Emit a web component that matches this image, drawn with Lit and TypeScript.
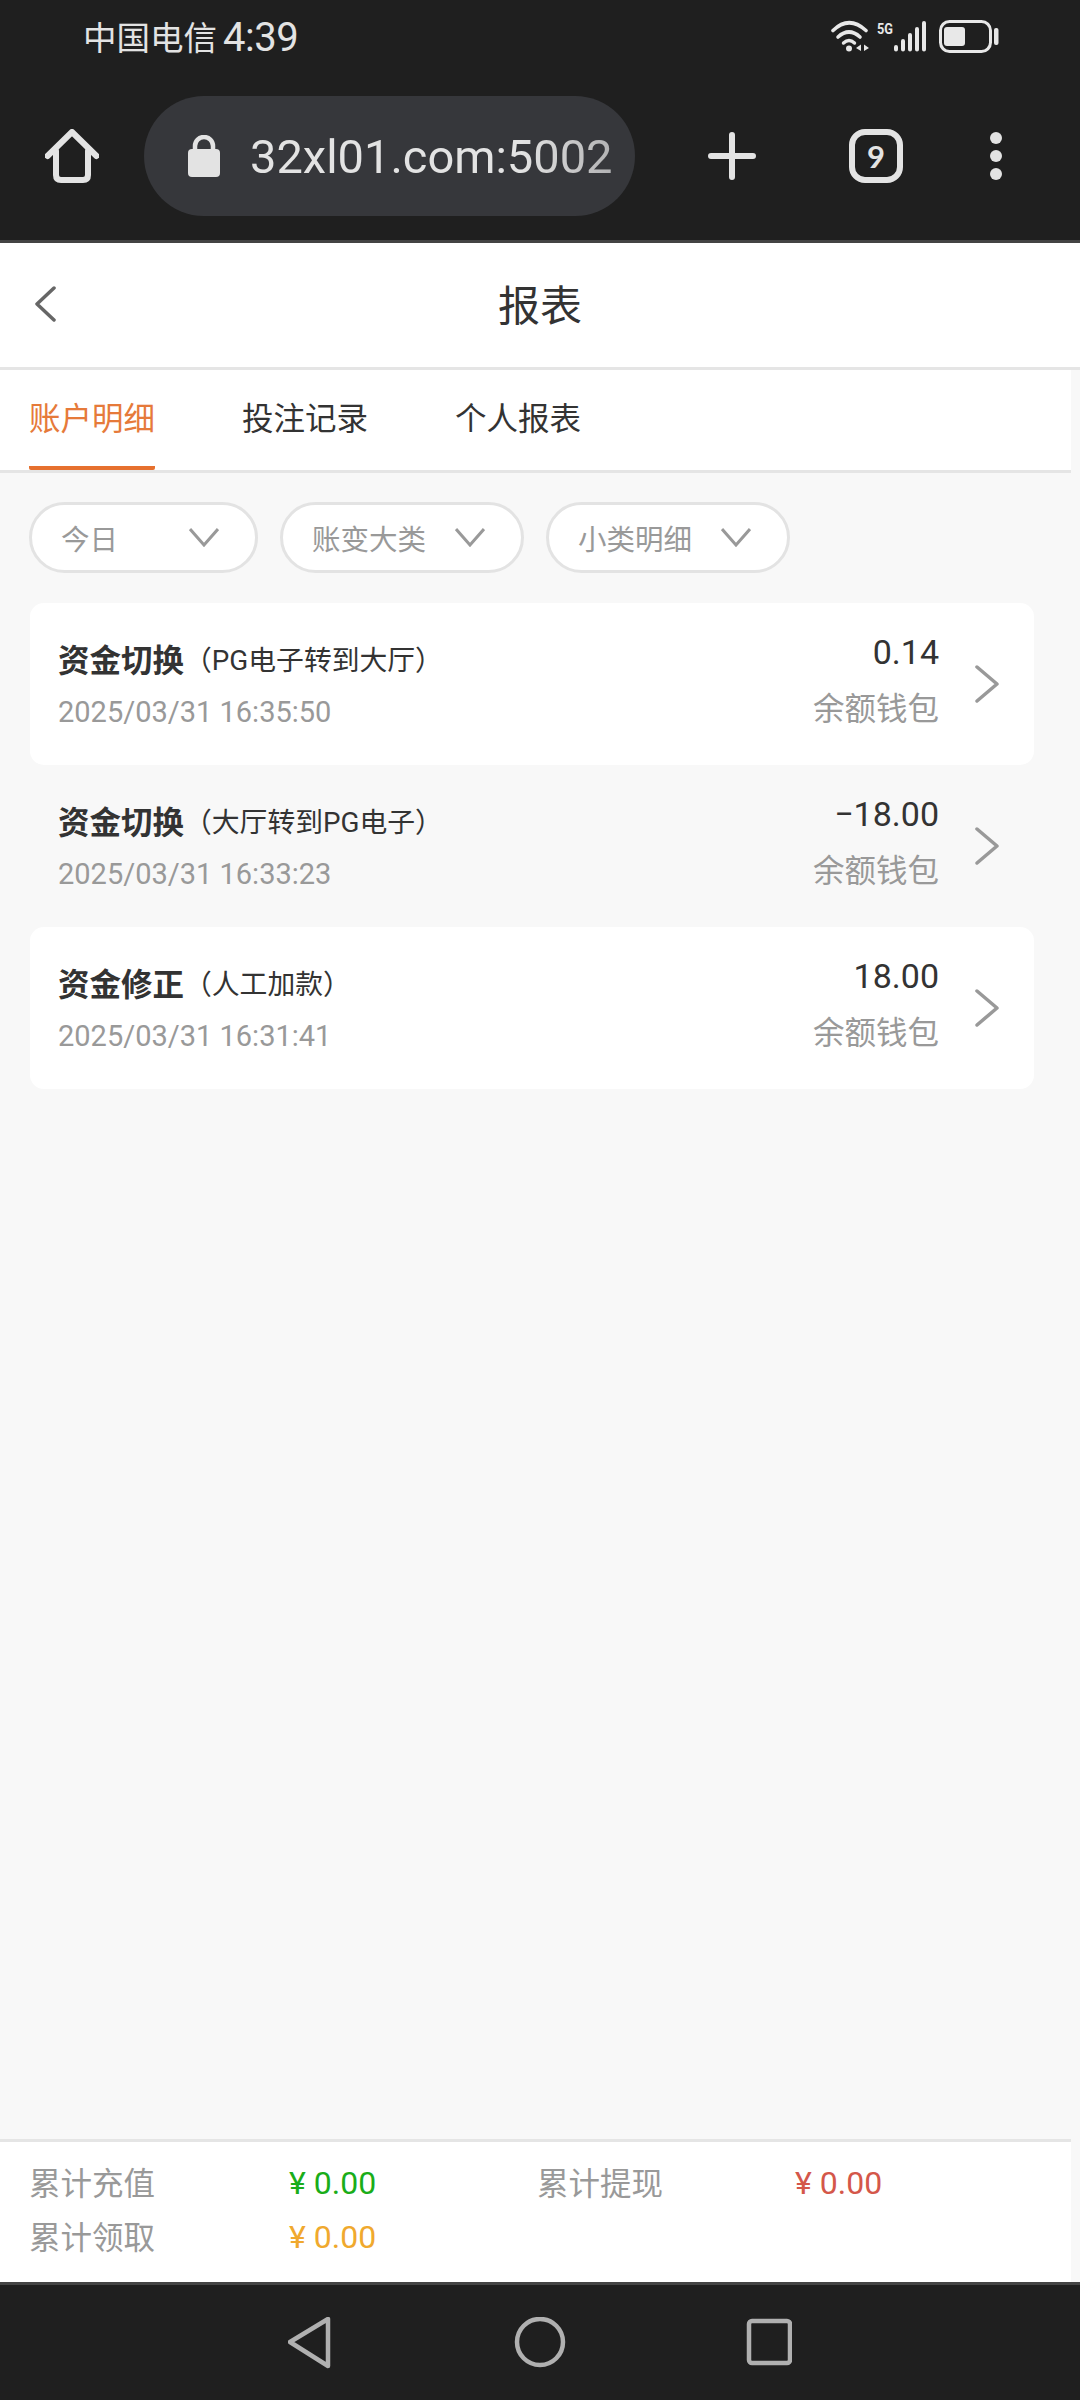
import { LitElement, html, css } from "lit";
import { customElement } from "lit/decorators.js";

const records = [
  { title: "资金切换", sub: "（PG电子转到大厅）", date: "2025/03/31 16:35:50", amount: "0.14", white: true },
  { title: "资金切换", sub: "（大厅转到PG电子）", date: "2025/03/31 16:33:23", amount: "−18.00", white: false },
  { title: "资金修正", sub: "（人工加款）", date: "2025/03/31 16:31:41", amount: "18.00", white: true },
];

@customElement("app-root")
export class AppRoot extends LitElement {
  static styles = css`
    :host { display: block; width: 1080px; height: 2400px; font-family: Roboto, "Noto Sans CJK SC", sans-serif; }
    * { box-sizing: border-box; }
    .page { height: 2400px; display: flex; flex-direction: column; background: #f8f8f8; overflow: hidden; }
    .browser { height: 243px; background: #1f1f1f; border-bottom: 3px solid #444; color: #e3e3e3; flex: none; }
    .status { height: 74px; display: flex; align-items: center; padding-left: 83px; padding-right: 80px; justify-content: space-between; }
    .carrier { display: flex; gap: 6px; align-items: center; }
    .cn { font-size: 33.5px; padding-bottom: 4px; }
    .time { font-size: 40px; letter-spacing: -0.5px; }
    .toolbar { height: 120px; margin-top: 22px; display: flex; align-items: center; padding-left: 45px; }
    .url { width: 491px; height: 120px; border-radius: 60px; background: #36373b; margin-left: 45px; display: flex; align-items: center; padding-left: 44px; flex: none; }
    .url-text { font-size: 47px; margin-left: 30px; color: #e3e3e3; white-space: nowrap; -webkit-mask-image: linear-gradient(90deg, #000 75%, rgba(0,0,0,.72) 100%); mask-image: linear-gradient(90deg, #000 75%, rgba(0,0,0,.72) 100%); }
    .plus { margin-left: 73px; }
    .tabs-btn { margin-left: 93px; width: 54px; height: 54px; border: 6px solid #e3e3e3; border-radius: 16px; display: flex; align-items: center; justify-content: center; font-size: 31px; font-weight: 700; font-family: Lato, sans-serif; line-height: 1; }
    .dots { margin-left: 87px; }
    svg { display: block; flex: none; }

    .header { height: 127px; flex: none; background: #fff; border-bottom: 3px solid #e5e5e5; display: flex; align-items: center; justify-content: center; position: relative; }
    .back { position: absolute; left: 34px; top: 43px; }
    .title { font-size: 42px; color: #333; padding-bottom: 6px; }

    .tabs { width: 1071px; height: 103px; flex: none; background: #fff; border-bottom: 3px solid #e5e5e5; display: flex; gap: 87px; padding-left: 29px; }
    .tab { height: 100px; line-height: 100px; font-size: 31.5px; color: #333; }
    .tab.active { color: #e67a3a; border-bottom: 4px solid #e6702e; border-radius: 0 0 2px 2px; }

    .filters { display: flex; gap: 22px; padding: 29px 0 0 29px; flex: none; }
    .pill { height: 71px; border: 3px solid #e3e3e3; border-radius: 36px; background: #fff; display: flex; align-items: center; justify-content: space-between; gap: 29px; padding: 0 36px 0 29px; font-size: 28.500px; color: #999; }
    .pill.wide { width: 229px; }

    .list { width: 1004px; margin: 30px 0 0 30px; flex: 1; }
    .card { height: 162px; border-radius: 14px; display: flex; padding-left: 28px; padding-right: 35px; align-items: center; }
    .card.white { background: #fff; }
    .left { flex: 1; align-self: flex-start; padding-top: 33px; }
    .name { display: flex; align-items: center; height: 44px; font-size: 31.500px; font-weight: 700; color: #333; }
    .sub { font-size: 27.800px; font-weight: 400; color: #333; }
    .date { font-size: 29px; line-height: 40px; margin-top: 12px; color: #999; }
    .right { align-self: flex-start; padding-top: 27px; text-align: right; }
    .amount { font-size: 34px; line-height: 44px; color: #333; }
    .wallet { font-size: 31.500px; line-height: 44px; margin-top: 14px; color: #999; }
    .arrow { margin-left: 36px; }

    .summary { width: 1071px; height: 143px; flex: none; background: #fff; border-top: 3px solid #e5e5e5; padding: 14px 0 0 29px; display: grid; grid-template-columns: 260px 248px 258px 1fr; grid-auto-rows: 54px; align-items: center; font-size: 32px; color: #999; }
    .label { font-size: 31.500px; padding-bottom: 5px; }
    .yen { margin-right: 8px; }
    .green { color: #1aad19; }
    .red { color: #d4574a; }
    .orange { color: #f0a92e; }

    .nav { height: 118px; flex: none; background: #1f1f1f; border-top: 3px solid #444; display: flex; align-items: center; justify-content: center; }
  `;

  render() {
    return html`
      <div class="page">
        <div class="browser">
          <div class="status">
            <div class="carrier"><span class="cn">中国电信</span><span class="time">4:39</span></div>
            <svg width="170" height="36" viewBox="830 19 170 36" fill="none" stroke="#e8e8e8">
              <path d="M833 30.5 Q849 15 866 30.5" stroke-width="3.6" stroke-linecap="round"/>
              <path d="M838 37 Q849 27 860 37" stroke-width="3.6" stroke-linecap="round"/>
              <path d="M843.5 43 Q849 38 854.500 43" stroke-width="3.4" stroke-linecap="round"/>
              <circle cx="849" cy="48.500" r="3" fill="#e8e8e8" stroke="none"/>
              <path d="M856 48 L861 44.500 V51 Z M864 44.500 L869 48 L864 51 Z" fill="#e8e8e8" stroke="none"/>
              <text x="877" y="34" font-family="Roboto" font-weight="700" font-size="15" fill="#e8e8e8" stroke="none" textLength="16" lengthAdjust="spacingAndGlyphs">5G</text>
              <g stroke-width="4" stroke-linecap="round">
                <path d="M896 47 V49.500M903 41 V49.500M910 35 V49.500M917 29 V49.500M924 23 V49.500"/>
              </g>
              <rect x="940.500" y="21.500" width="50" height="30" rx="9" stroke-width="3"/>
              <rect x="944" y="27" width="21" height="19" rx="3" fill="#e8e8e8" stroke="none"/>
              <rect x="994" y="28" width="4.500" height="17" rx="2" fill="#e8e8e8" stroke="none"/>
            </svg>
          </div>
          <div class="toolbar">
            <svg width="54" height="54" viewBox="0 0 54 54" fill="none" stroke="#e3e3e3" stroke-width="6" stroke-linejoin="round" stroke-linecap="round">
              <path d="M2.500 27 L27 3 L51.500 27"/>
              <path d="M11 22 V46 Q11 51 16 51 H38 Q43 51 43 46 V22"/>
            </svg>
            <div class="url">
              <svg width="32" height="42" viewBox="0 0 32 42">
                <path d="M7 16 V11 A9 9 0 0 1 25 11 V16" fill="none" stroke="#e3e3e3" stroke-width="4.500"/>
                <rect x="0" y="14" width="32" height="28" rx="4" fill="#e3e3e3"/>
              </svg>
              <span class="url-text">32xl01.com:5002</span>
            </div>
            <svg class="plus" width="48" height="48" viewBox="0 0 48 48" stroke="#e3e3e3" stroke-width="6" stroke-linecap="round">
              <path d="M3 24 H45 M24 3 V45"/>
            </svg>
            <div class="tabs-btn">9</div>
            <svg class="dots" width="12" height="48" viewBox="0 0 12 48" fill="#e3e3e3">
              <circle cx="6" cy="6" r="6"/><circle cx="6" cy="24" r="6"/><circle cx="6" cy="42" r="6"/>
            </svg>
          </div>
        </div>

        <div class="header">
          <svg class="back" width="22" height="36" viewBox="0 0 22 36" fill="none" stroke="#666" stroke-width="3.500" stroke-linecap="round" stroke-linejoin="round">
            <path d="M20 2 L3 18 L20 34"/>
          </svg>
          <div class="title">报表</div>
        </div>

        <div class="tabs">
          <div class="tab active">账户明细</div>
          <div class="tab">投注记录</div>
          <div class="tab">个人报表</div>
        </div>

        <div class="filters">
          ${[["今日", true], ["账变大类", false], ["小类明细", false]].map(
            ([label, wide]) => html`
              <div class="pill ${wide ? "wide" : ""}">
                <span>${label}</span>
                <svg width="30" height="19" viewBox="0 0 30 19" fill="none" stroke="#999" stroke-width="3">
                  <path d="M1 1 L15 17 L29 1"/>
                </svg>
              </div>`
          )}
        </div>

        <div class="list">
          ${records.map(
            (r) => html`
              <div class="card ${r.white ? "white" : ""}">
                <div class="left">
                  <div class="name">${r.title}<span class="sub">${r.sub}</span></div>
                  <div class="date">${r.date}</div>
                </div>
                <div class="right">
                  <div class="amount">${r.amount}</div>
                  <div class="wallet">余额钱包</div>
                </div>
                <svg class="arrow" width="24" height="38" viewBox="0 0 24 38" fill="none" stroke="#999" stroke-width="3.500" stroke-linecap="round" stroke-linejoin="round">
                  <path d="M2 2 L22 19 L2 36"/>
                </svg>
              </div>`
          )}
        </div>

        <div class="summary">
          <div class="label">累计充值</div><div class="green"><span class="yen">¥</span>0.00</div>
          <div class="label">累计提现</div><div class="red"><span class="yen">¥</span>0.00</div>
          <div class="label">累计领取</div><div class="orange"><span class="yen">¥</span>0.00</div>
        </div>

        <div class="nav">
          <svg width="504" height="52" viewBox="288 2316 504 52" fill="none" stroke="#b0b0b0" stroke-width="4.500" stroke-linejoin="round" stroke-linecap="round">
            <path d="M328 2318 V2365 L290 2341 Z"/>
            <circle cx="540" cy="2341" r="23"/>
            <rect x="749" y="2320" width="41" height="42" rx="3"/>
          </svg>
        </div>
      </div>
    `;
  }
}
